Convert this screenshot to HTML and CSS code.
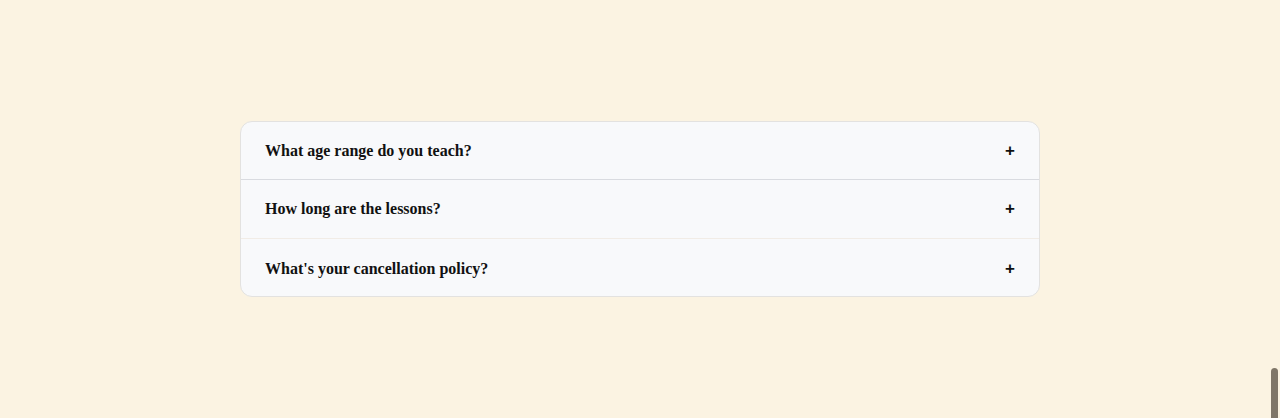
FILE: index.html
```html
<!DOCTYPE html>
<html lang="en">
<head>
<meta charset="utf-8">
<title>FAQ</title>
<link rel="stylesheet" href="styles.css">
</head>
<body>
<main class="page">
  <section class="faq">
    <div class="faq-item">
      <button class="faq-q"><span>What age range do you teach?</span><span class="faq-icon">+</span></button>
    </div>
    <div class="faq-item faq-item--light">
      <button class="faq-q faq-q--tall"><span>How long are the lessons?</span><span class="faq-icon">+</span></button>
    </div>
    <div class="faq-item">
      <button class="faq-q faq-q--low"><span>What's your cancellation policy?</span><span class="faq-icon">+</span></button>
    </div>
  </section>
</main>
<div class="thumb"></div>
</body>
</html>
```
FILE: styles.css
```css
html, body {
  margin: 0;
  padding: 0;
  height: 100%;
}
body {
  background: #fbf3e2;
  font-family: "Liberation Serif", "Times New Roman", serif;
  overflow: hidden;
}
.page {
  height: 100%;
  display: flex;
  align-items: center;
  justify-content: center;
}
.faq {
  width: 798px;
  background: #f8f9fb;
  border: 1px solid #e3e2e0;
  border-radius: 12px;
  overflow: hidden;
}
.faq-item + .faq-item {
  border-top: 1px solid #d9dbe0;
}
.faq-item--light + .faq-item {
  border-top-color: #f1ece6;
}
.faq-q {
  display: flex;
  width: 100%;
  justify-content: space-between;
  align-items: center;
  padding: 20px 24px 19px;
  background: transparent;
  border: 0;
  font-family: inherit;
  font-weight: 700;
  font-size: 16px;
  line-height: 18px;
  color: #111;
  text-align: left;
  cursor: pointer;
}
.faq-q--tall {
  padding-bottom: 20px;
}
.faq-q--low {
  padding-top: 21px;
  padding-bottom: 18px;
}
.faq-icon {
  font-size: 17px;
  line-height: 18px;
  font-family: "Liberation Sans", Arial, sans-serif;
  font-weight: 700;
}
.thumb {
  position: fixed;
  right: 2px;
  bottom: 0;
  width: 7px;
  height: 50px;
  background: #7f7668;
  border-radius: 4px 4px 0 0;
}
```
